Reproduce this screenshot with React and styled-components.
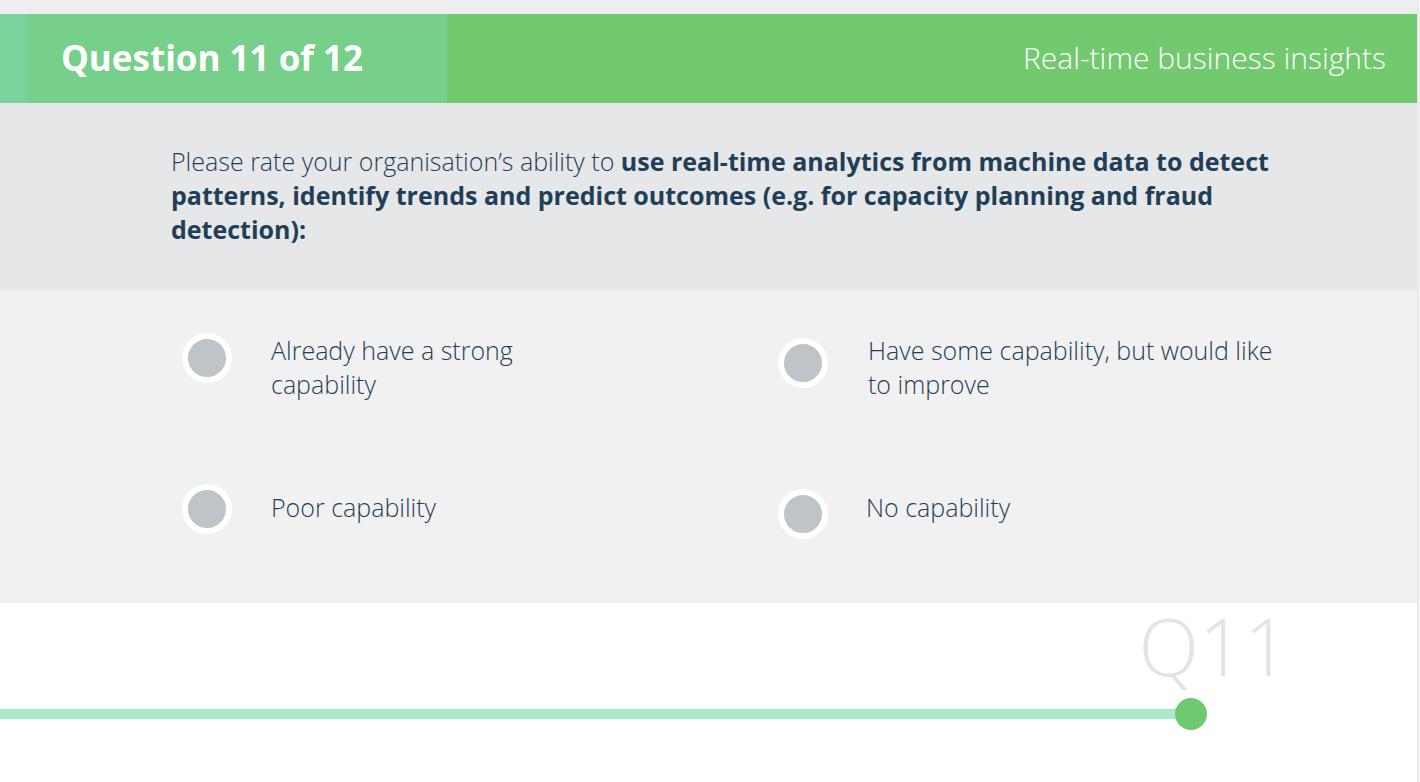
import React from "react";
import styled, { createGlobalStyle } from "styled-components";

const GlobalStyle = createGlobalStyle`
  html, body {
    margin: 0;
    padding: 0;
    background: #eceef0;
  }
  body {
    font-family: "Open Sans", "Liberation Sans", sans-serif;
  }
`;

const Shell = styled.div`
  display: flex;
  width: 1420px;
  height: 782px;
  overflow: hidden;
  background: #eceef0;
`;

const Page = styled.div`
  width: 1417px;
  margin-top: 14px;
  display: flex;
  flex-direction: column;
  background: #ffffff;
`;

const RightEdge = styled.div`
  flex: 1;
  background: #eef0f1;
  border-left: 1px solid #e4e6e8;
`;

const Header = styled.header`
  display: flex;
  height: 89px;
  background: #72c96e;
`;

const Accent = styled.div`
  width: 27px;
  background: #78d49a;
`;

const TitleBlock = styled.div`
  width: 386px;
  padding-left: 34px;
  display: flex;
  align-items: center;
  background: #77d08a;
`;

const Title = styled.h1`
  margin: 0 0 3px;
  font-size: 35px;
  font-weight: 700;
  color: #ffffff;
  letter-spacing: 0;
`;

const Topic = styled.div`
  flex: 1;
  display: flex;
  align-items: center;
  justify-content: flex-end;
  padding-right: 31px;
  padding-bottom: 2px;
  font-size: 30px;
  font-weight: 300;
  color: #ffffff;
`;

const QuestionPanel = styled.section`
  height: 187px;
  box-sizing: border-box;
  padding: 41px 140px 0 171px;
  background: #e6e7e9;
`;

const QuestionText = styled.p`
  margin: 0;
  font-size: 25px;
  line-height: 34px;
  font-weight: 300;
  color: #1f3f58;

  strong {
    font-weight: 700;
  }
`;

const OptionsPanel = styled.section`
  height: 313px;
  box-sizing: border-box;
  padding: 43px 0 0 182px;
  background: #f1f1f1;
  display: grid;
  grid-template-columns: 596px 596px;
  grid-auto-rows: min-content;
  row-gap: 83px;
`;

const Option = styled.label`
  display: flex;
  align-items: flex-start;
  cursor: pointer;
`;

const Radio = styled.span`
  flex: none;
  width: 50px;
  height: 50px;
  box-sizing: border-box;
  border-radius: 50%;
  border: 6px solid #ffffff;
  background: #bec4c8;
  margin-top: ${(p) => p.$dy}px;
`;

const OptionLabel = styled.span`
  margin-left: ${(p) => p.$gap}px;
  margin-top: ${(p) => p.$ty}px;
  max-width: ${(p) => p.$width}px;
  font-size: 25px;
  line-height: 34px;
  font-weight: 300;
  color: #1f3f58;
`;

const Footer = styled.footer`
  flex: 1;
  background: #ffffff;
  padding-top: 3px;
  display: flex;
  flex-direction: column;
`;

const QuestionNumber = styled.div`
  align-self: flex-end;
  margin-right: 128px;
  font-size: 79px;
  line-height: 79px;
  font-weight: 300;
  color: #e2e4e6;
`;

const Track = styled.div`
  position: relative;
  margin-top: 24px;
  width: 1190px;
  height: 10px;
  background: #ade9cb;
`;

const Knob = styled.span`
  position: absolute;
  right: -17px;
  top: 50%;
  width: 32px;
  height: 32px;
  margin-top: -16px;
  border-radius: 50%;
  background: #6fc96e;
`;

const options = [
  { text: "Already have a strong capability", width: 300, dy: 0, ty: 0, gap: 39 },
  { text: "Have some capability, but would like to improve", width: 415, dy: 5, ty: 0, gap: 40 },
  { text: "Poor capability", width: 300, dy: 0, ty: 6, gap: 39 },
  { text: "No capability", width: 415, dy: 5, ty: 6, gap: 38 },
];

export default function App() {
  return (
    <>
      <GlobalStyle />
      <Shell>
        <Page>
          <Header>
            <Accent />
            <TitleBlock>
              <Title>Question 11 of 12</Title>
            </TitleBlock>
            <Topic>Real-time business insights</Topic>
          </Header>
          <QuestionPanel>
            <QuestionText>
              Please rate your organisation’s ability to{" "}
              <strong>
                use real-time analytics from machine data to detect patterns,
                identify trends and predict outcomes (e.g. for capacity planning
                and fraud detection):
              </strong>
            </QuestionText>
          </QuestionPanel>
          <OptionsPanel>
            {options.map((o) => (
              <Option key={o.text}>
                <Radio $dy={o.dy} />
                <OptionLabel $width={o.width} $ty={o.ty} $gap={o.gap}>
                  {o.text}
                </OptionLabel>
              </Option>
            ))}
          </OptionsPanel>
          <Footer>
            <QuestionNumber>Q11</QuestionNumber>
            <Track>
              <Knob />
            </Track>
          </Footer>
        </Page>
        <RightEdge />
      </Shell>
    </>
  );
}
